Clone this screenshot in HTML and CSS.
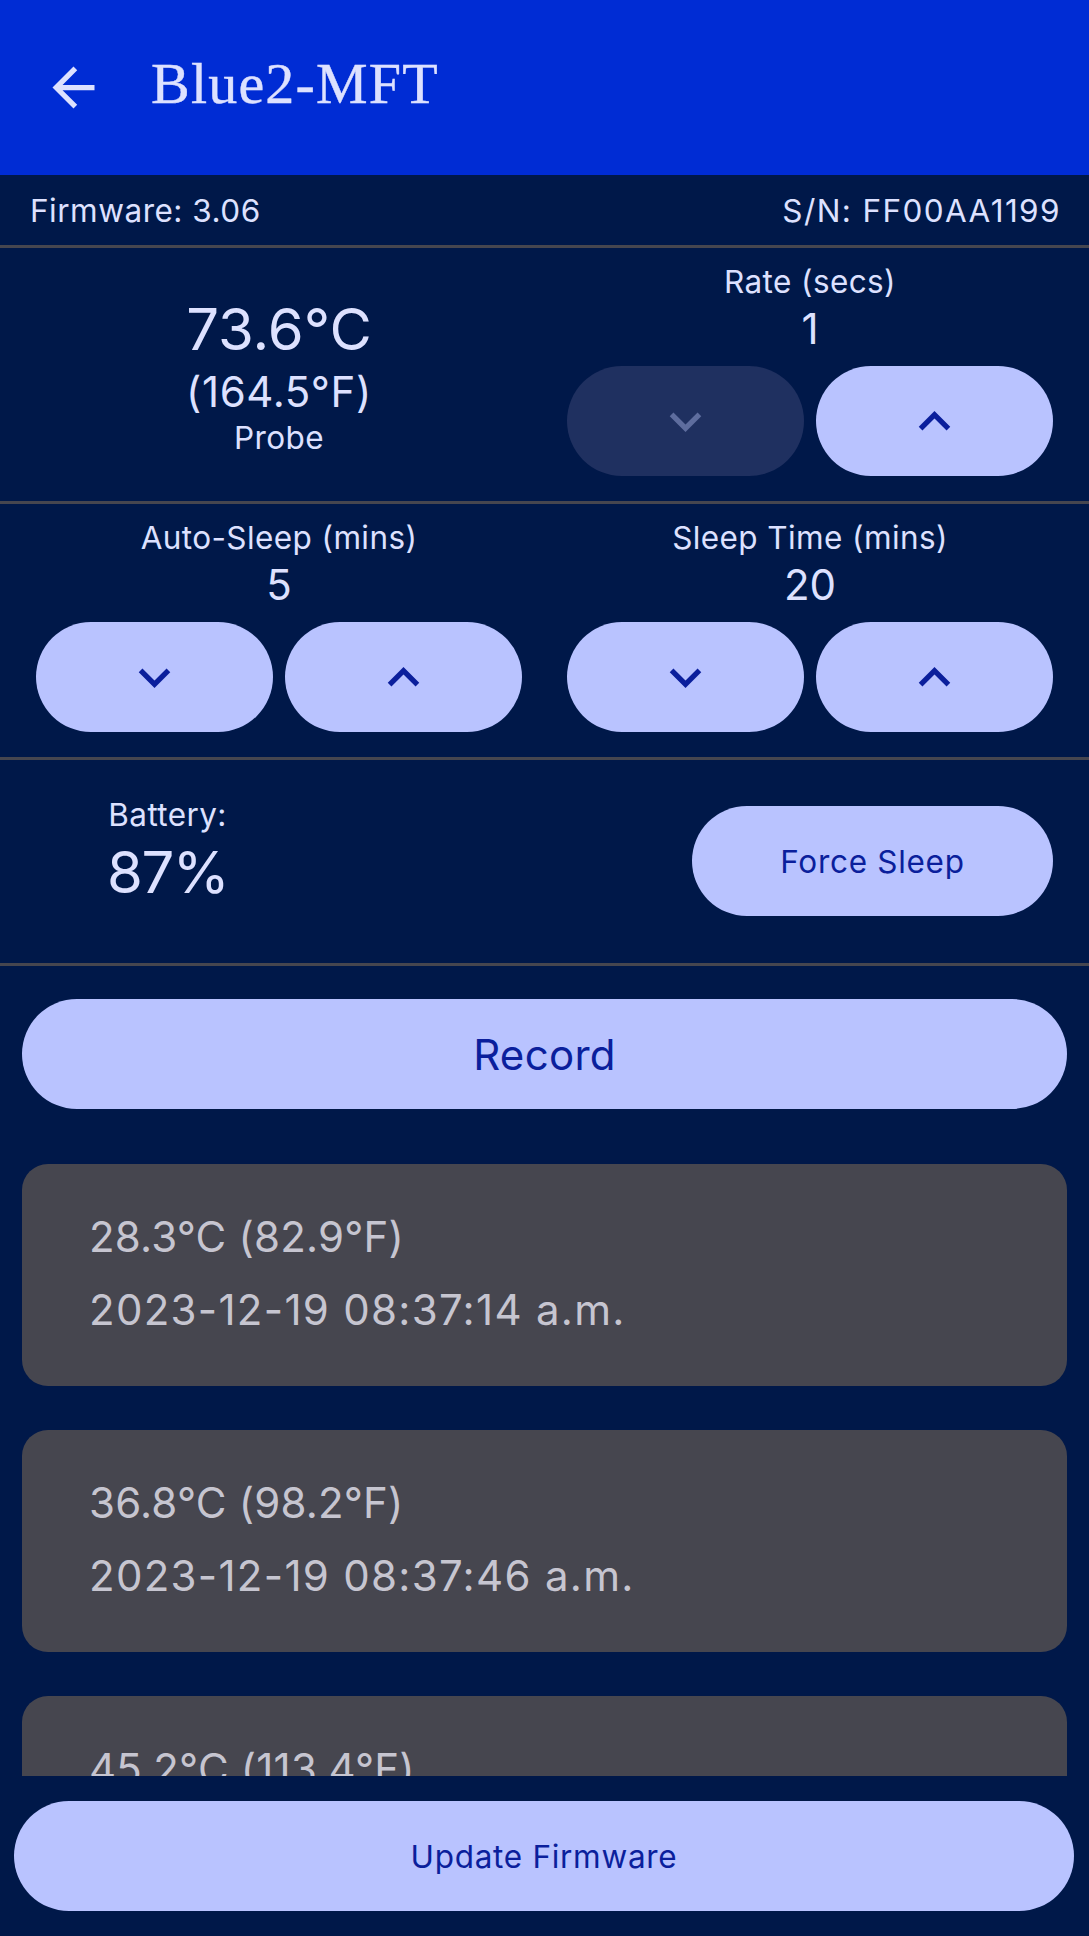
FILE: index.html
```html
<!DOCTYPE html>
<html lang="en">
<head>
<meta charset="utf-8">
<title>Blue2-MFT</title>
<link rel="stylesheet" href="styles.css">
</head>
<body>
<div class="app">
  <header class="appbar">
    <svg class="back" viewBox="0 0 24 24" aria-hidden="true"><path d="M20 11H7.83l5.59-5.59L12 4l-8 8 8 8 1.41-1.41L7.83 13H20v-2z"/></svg>
    <h1 class="title">Blue2-MFT</h1>
  </header>

  <main class="scroll">
    <div class="info-row">
      <span>Firmware: 3.06</span>
      <span class="serial">S/N: FF00AA1199</span>
    </div>

    <section class="section grid2">
      <div class="temp">
        <div class="temp-c">73.6°C</div>
        <div class="temp-f">(164.5°F)</div>
        <div class="temp-label">Probe</div>
      </div>
      <div class="stepper">
        <div class="label">Rate (secs)</div>
        <div class="value">1</div>
        <div class="btn-pair">
          <button class="pill disabled"><svg viewBox="0 0 24 24"><path d="M16.59 8.59L12 13.17 7.41 8.59 6 10l6 6 6-6z"/></svg></button>
          <button class="pill"><svg viewBox="0 0 24 24"><path d="M12 8l-6 6 1.41 1.41L12 10.83l4.59 4.58L18 14z"/></svg></button>
        </div>
      </div>
    </section>

    <section class="section grid2">
      <div class="stepper">
        <div class="label">Auto-Sleep (mins)</div>
        <div class="value">5</div>
        <div class="btn-pair">
          <button class="pill"><svg viewBox="0 0 24 24"><path d="M16.59 8.59L12 13.17 7.41 8.59 6 10l6 6 6-6z"/></svg></button>
          <button class="pill"><svg viewBox="0 0 24 24"><path d="M12 8l-6 6 1.41 1.41L12 10.83l4.59 4.58L18 14z"/></svg></button>
        </div>
      </div>
      <div class="stepper">
        <div class="label">Sleep Time (mins)</div>
        <div class="value">20</div>
        <div class="btn-pair">
          <button class="pill"><svg viewBox="0 0 24 24"><path d="M16.59 8.59L12 13.17 7.41 8.59 6 10l6 6 6-6z"/></svg></button>
          <button class="pill"><svg viewBox="0 0 24 24"><path d="M12 8l-6 6 1.41 1.41L12 10.83l4.59 4.58L18 14z"/></svg></button>
        </div>
      </div>
    </section>

    <section class="section grid2 battery-row">
      <div class="battery-cell">
        <div class="battery">
          <div class="label">Battery:</div>
          <div class="battery-value">87%</div>
        </div>
      </div>
      <button class="pill text-btn force">Force Sleep</button>
    </section>

    <div class="content">
      <button class="pill record">Record</button>

      <div class="cards">
        <div class="card">
          <div class="card-line">28.3°C (82.9°F)</div>
          <div class="card-line card-date">2023-12-19 08:37:14 a.m.</div>
        </div>
        <div class="card">
          <div class="card-line">36.8°C (98.2°F)</div>
          <div class="card-line card-date">2023-12-19 08:37:46 a.m.</div>
        </div>
        <div class="card">
          <div class="card-line">45.2°C (113.4°F)</div>
          <div class="card-line card-date">2023-12-19 08:38:18 a.m.</div>
        </div>
      </div>
    </div>
  </main>

  <footer class="bottom">
    <button class="pill text-btn update">Update Firmware</button>
  </footer>
</div>
</body>
</html>
```

FILE: styles.css
```css
* { box-sizing: border-box; }

html, body {
  margin: 0;
  padding: 0;
  background: #001849;
}

body {
  font-family: "Inter", "Roboto", "Liberation Sans", sans-serif;
  color: #dde1ff;
}

.app {
  width: 1089px;
  height: 1936px;
  display: flex;
  flex-direction: column;
  overflow: hidden;
}

/* ---------- app bar ---------- */
.appbar {
  flex: 0 0 175px;
  height: 175px;
  background: #002cd4;
  display: flex;
  align-items: center;
  padding-left: 42px;
}

.back {
  width: 63px;
  height: 63px;
  fill: #dde1ff;
  flex: 0 0 63px;
}

.title {
  margin: 0 0 0 46px;
  padding-bottom: 7px;
  font-family: "Liberation Serif", "DejaVu Serif", serif;
  font-weight: 400;
  font-size: 58px;
  line-height: 70px;
  letter-spacing: 1.2px;
  color: #dde1ff;
  -webkit-text-stroke: 0.4px #dde1ff;
}

/* ---------- scroll area ---------- */
.scroll {
  flex: 1 1 auto;
  overflow: hidden;
  display: flex;
  flex-direction: column;
}

.info-row {
  flex: 0 0 70px;
  height: 70px;
  display: flex;
  align-items: center;
  justify-content: space-between;
  padding: 0 28px 0 30px;
  font-size: 31.5px;
  letter-spacing: 0.5px;
  color: #dde1ff;
}

.serial {
  letter-spacing: 1.4px;
}

.section {
  border-top: 3px solid #46464f;
}

.grid2 {
  display: grid;
  grid-template-columns: 1fr 1fr;
  column-gap: 45px;
  padding: 14px 36px 25px;
}

/* temperature */
.temp {
  display: flex;
  flex-direction: column;
  align-items: center;
  justify-content: center;
  text-align: center;
  margin-top: 11px;
}

.temp-c {
  font-size: 58px;
  line-height: 70px;
}

.temp-f {
  font-size: 42px;
  line-height: 56px;
  letter-spacing: 0.6px;
}

.temp-label {
  font-size: 31.5px;
  line-height: 36px;
  letter-spacing: 0.4px;
}

/* steppers */
.stepper {
  display: flex;
  flex-direction: column;
  align-items: stretch;
  text-align: center;
}

.label {
  font-size: 31.5px;
  line-height: 40px;
  letter-spacing: 0.4px;
}

.value {
  font-size: 42px;
  line-height: 54px;
  margin-bottom: 10px;
}

.btn-pair {
  display: grid;
  grid-template-columns: 1fr 1fr;
  column-gap: 12px;
}

.pill {
  border: 0;
  margin: 0;
  padding: 0;
  height: 110px;
  border-radius: 55px;
  background: #b9c3ff;
  color: #0b1f9c;
  display: flex;
  align-items: center;
  justify-content: center;
  font-family: "Inter", "Roboto", "Liberation Sans", sans-serif;
}

.pill svg {
  width: 63px;
  height: 63px;
  fill: #0b1f9c;
}

.pill.disabled {
  background: #1f3060;
}

.pill.disabled svg {
  fill: #5e6d9e;
}

/* battery row */
.battery-row {
  border-bottom: 3px solid #46464f;
  padding-top: 46px;
  padding-bottom: 47px;
  align-items: center;
}

.battery-cell {
  display: flex;
  align-items: center;
  height: 110px;
}

.battery {
  margin: -13px 0 5px 71px;
  display: flex;
  flex-direction: column;
  align-items: center;
}

.battery-value {
  font-size: 58px;
  line-height: 74px;
  letter-spacing: -1.5px;
}

.text-btn {
  font-size: 31.5px;
  letter-spacing: 0.7px;
}

.force {
  width: 361px;
  justify-self: end;
}

/* record + history */
.content {
  padding: 33px 22px 0;
}

.record {
  width: 100%;
  font-size: 42px;
  letter-spacing: 0.3px;
}

.cards {
  margin-top: 55px;
  display: flex;
  flex-direction: column;
  gap: 44px;
}

.card {
  background: #46464f;
  border-radius: 26px;
  padding: 47px 69px 50px 67px;
  display: flex;
  flex-direction: column;
  gap: 21px;
  color: #c6c5d0;
}

.card-line {
  font-size: 42px;
  line-height: 52px;
  letter-spacing: 0.2px;
}

.card-date {
  letter-spacing: 1.3px;
}

/* bottom bar */
.bottom {
  flex: 0 0 160px;
  height: 160px;
  padding: 25px 15px 25px 14px;
}

.update {
  width: 100%;
}
```
